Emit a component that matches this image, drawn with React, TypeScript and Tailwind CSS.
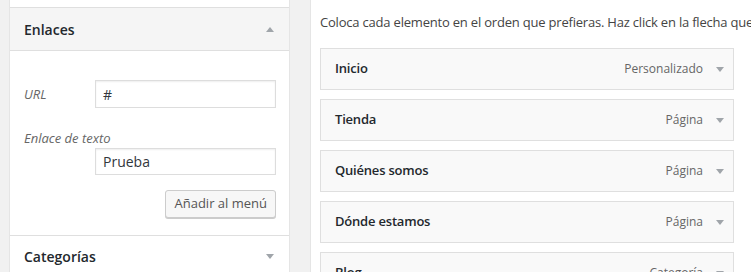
import React from "react";

function Arrow({ up = false }: { up?: boolean }) {
  return (
    <svg width="8" height="5" viewBox="0 0 8 5" className="shrink-0">
      {up ? (
        <path d="M0 5 L8 5 L4 0 Z" fill="#a0a5aa" />
      ) : (
        <path d="M0 0 L8 0 L4 5 Z" fill="#a0a5aa" />
      )}
    </svg>
  );
}

const items = [
  { title: "Inicio", type: "Personalizado" },
  { title: "Tienda", type: "Página" },
  { title: "Quiénes somos", type: "Página" },
  { title: "Dónde estamos", type: "Página" },
  { title: "Blog", type: "Categoría" },
];

export default function App() {
  return (
    <div className="flex h-[272px] w-[751px] overflow-hidden bg-[#f1f1f1] font-['Open_Sans',sans-serif] text-[13px] text-[#444]">
      {/* Left accordion panel */}
      <div className="ml-[9px] w-[281px] shrink-0 border-x border-[#e5e5e5] bg-white">
        <div className="h-[8px] border-b border-[#dfdfdf]" />
        <div className="flex h-[43px] items-center justify-between border-b border-[#dfdfdf] bg-[#f5f5f5] pl-[14px] pr-[15px]">
          <span className="text-[14px] font-semibold text-[#23282d]">Enlaces</span>
          <Arrow up />
        </div>
        <div className="h-[185px] border-b border-[#dfdfdf] pl-[14px] pr-[13px] pt-[29px]">
          <div className="flex items-center">
            <label className="mt-[2px] w-[71px] italic text-[#666]">URL</label>
            <div className="flex h-[28px] flex-1 items-center border border-[#ddd] px-[7px] text-[14px] text-[#32373c] shadow-[inset_0_1px_2px_rgba(0,0,0,0.07)]">
              #
            </div>
          </div>
          <div className="mt-[20px] leading-[20px] italic text-[#666]">Enlace de texto</div>
          <div className="ml-[71px] flex h-[27px] items-center border border-[#ddd] px-[7px] text-[14px] text-[#32373c] shadow-[inset_0_1px_2px_rgba(0,0,0,0.07)]">
            Prueba
          </div>
          <div className="mt-[15px] flex justify-end">
            <button className="h-[28px] rounded-[3px] border border-[#ccc] bg-[#f7f7f7] px-[8px] text-[13px] text-[#555] shadow-[0_1px_0_#ccc]">
              Añadir al menú
            </button>
          </div>
        </div>
        <div className="flex h-[41px] items-center justify-between pl-[14px] pr-[15px]">
          <span className="text-[14px] font-semibold text-[#23282d]">Categorías</span>
          <Arrow />
        </div>
      </div>

      {/* Right menu structure panel */}
      <div className="ml-[20px] flex-1 border-l border-[#e5e5e5] bg-white pl-[9px] pt-[13px]">
        <p className="whitespace-nowrap leading-[18px] tracking-[-0.2px] text-[#444]">
          Coloca cada elemento en el orden que prefieras. Haz click en la flecha que hay a la derecha del elemento para mostrar más opciones de configuración.
        </p>
        <div className="mt-[17px] flex w-[414px] flex-col gap-[9px]">
          {items.map((it) => (
            <div
              key={it.title}
              className="flex h-[42px] shrink-0 items-center justify-between border border-[#dfdfdf] bg-[#f9f9f9] pl-[14px] pr-[9px]"
            >
              <span className="font-semibold tracking-[-0.2px] text-[#23282d]">{it.title}</span>
              <div className="flex items-center gap-[13px]">
                <span className="text-[12px] text-[#666]">{it.type}</span>
                <Arrow />
              </div>
            </div>
          ))}
        </div>
      </div>
    </div>
  );
}
